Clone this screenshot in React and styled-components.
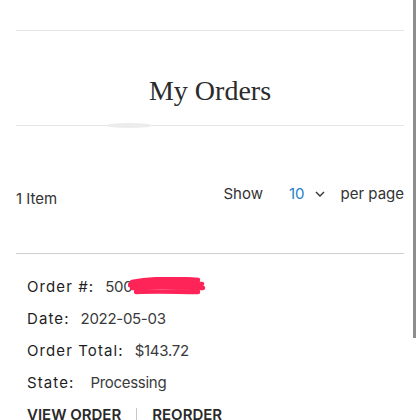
import React from "react";
import styled, { createGlobalStyle } from "styled-components";

const Global = createGlobalStyle`
  html, body { margin: 0; padding: 0; background: #fff; }
  body { font-family: Inter, "Noto Sans", "Liberation Sans", sans-serif; color: #222; }
`;

const Page = styled.div`
  width: 420px;
  height: 420px;
  overflow: hidden;
  box-sizing: border-box;
  padding: 0 16px;
  display: flex;
  flex-direction: column;
`;

const Divider = styled.div`
  height: 1px;
  background: ${(p) => p.$color || "#e6e6e6"};
  margin-top: ${(p) => p.$top || 0}px;
  position: relative;
  flex-shrink: 0;
`;

const Smudge = styled.span`
  position: absolute;
  left: 90px;
  top: -2px;
  width: 46px;
  height: 5px;
  border-radius: 50%;
  background: #ececec;
`;

const Title = styled.h1`
  margin: 43px 0 17px;
  flex-shrink: 0;
  font-family: "Liberation Serif", "DejaVu Serif", serif;
  font-weight: 400;
  font-size: 28px;
  line-height: 34px;
  color: #2b2b2b;
  text-align: center;
`;

const Toolbar = styled.div`
  height: 127px;
  flex-shrink: 0;
  box-sizing: border-box;
  padding-top: 58px;
  display: flex;
  align-items: flex-start;
  justify-content: space-between;
  font-size: 15px;
  line-height: 20px;
  color: #333;
`;

const Count = styled.div`
  margin-top: 5px;
`;

const Limiter = styled.div`
  display: flex;
  align-items: center;
`;

const LimitValue = styled.span`
  color: #1f7fc9;
  margin-left: 26px;
`;

const Chevron = styled.svg`
  width: 12px;
  height: 12px;
  margin-left: 9px;
  margin-right: 15px;
`;

const Details = styled.div`
  flex-shrink: 0;
  padding-top: 23px;
  padding-left: 11px;
  display: flex;
  flex-direction: column;
  gap: 12px;
`;

const Row = styled.div`
  display: flex;
  align-items: center;
  font-size: 15px;
  line-height: 20px;
`;

const Label = styled.span`
  color: #1e1e1e;
  letter-spacing: 1.1px;
`;

const Value = styled.span`
  color: #3a3a3a;
  margin-left: ${(p) => p.$gap || 11}px;
  letter-spacing: -0.3px;
  display: inline-flex;
  align-items: center;
`;

const Scribble = styled.svg`
  width: 78px;
  height: 20px;
  margin-left: -4px;
`;

const Actions = styled.div`
  display: flex;
  align-items: center;
  font-size: 15px;
  line-height: 20px;
  font-weight: 600;
  letter-spacing: 0;
  color: #2a2a2a;
  text-transform: uppercase;
`;

const Sep = styled.span`
  width: 1px;
  height: 14px;
  background: #c8c8c8;
  margin: 0 15px;
`;

const Scrollbar = styled.div`
  position: fixed;
  right: 4px;
  top: 0;
  width: 3px;
  height: 338px;
  background: #8d8d8d;
`;

export default function App() {
  return (
    <>
      <Global />
      <Page>
        <Divider $top={30} />
        <Title>My Orders</Title>
        <Divider>
          <Smudge />
        </Divider>
        <Toolbar>
          <Count>1 Item</Count>
          <Limiter>
            <span>Show</span>
            <LimitValue>10</LimitValue>
            <Chevron viewBox="0 0 12 12">
              <path d="M2 4 L6 8 L10 4" fill="none" stroke="#333" strokeWidth="1.4" />
            </Chevron>
            <span>per page</span>
          </Limiter>
        </Toolbar>
        <Divider $color="#cfcfcf" />
        <Details>
          <Row>
            <Label>Order #:</Label>
            <Value>
              500
              <Scribble viewBox="0 0 78 20">
                <path
                  d="M4 5 C20 2 45 1 70 3 M2 8 C25 6 50 5 74 7 M4 11 C28 9 52 10 75 11 M8 15 C30 14 50 15 70 15"
                  fill="none"
                  stroke="#ff2458"
                  strokeWidth="4.5"
                  strokeLinecap="round"
                />
              </Scribble>
            </Value>
          </Row>
          <Row>
            <Label>Date:</Label>
            <Value>2022-05-03</Value>
          </Row>
          <Row>
            <Label>Order Total:</Label>
            <Value>$143.72</Value>
          </Row>
          <Row>
            <Label>State:</Label>
            <Value $gap={16}>Processing</Value>
          </Row>
          <Actions>
            <span>View Order</span>
            <Sep />
            <span>Reorder</span>
          </Actions>
        </Details>
      </Page>
      <Scrollbar />
    </>
  );
}
